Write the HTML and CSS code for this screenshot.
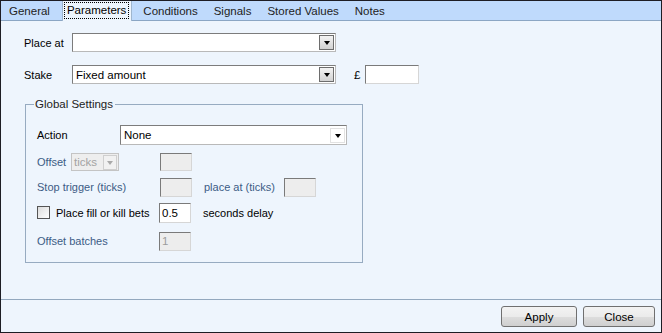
FILE: index.html
```html
<!DOCTYPE html>
<html>
<head>
	<title>Parameters</title>
	<link rel="stylesheet" href="styles.css">
</head>
<body>

	<div class="win">
		<div class="tabs">
			<span class="tab">General</span>
			<span class="tab sel"><span class="focus">Parameters</span></span>
			<span class="tab">Conditions</span>
			<span class="tab">Signals</span>
			<span class="tab">Stored Values</span>
			<span class="tab">Notes</span>
		</div>

		<div class="page">
			<div class="row r-place">
				<span class="lbl w48">Place at</span>
				<div class="combo wide"><span class="val"></span><span class="drop"><i></i></span></div>
			</div>

			<div class="row r-stake">
				<span class="lbl w48">Stake</span>
				<div class="combo wide"><span class="val">Fixed amount</span><span class="drop"><i></i></span></div>
				<span class="pound">&pound;</span>
				<span class="box money"></span>
			</div>

			<fieldset class="group">
				<legend>Global Settings</legend>

				<div class="row g-action">
					<span class="lbl w83">Action</span>
					<div class="combo action"><span class="val">None</span><span class="drop flat"><i></i></span></div>
				</div>

				<div class="row g-offset">
					<span class="lbl dis w34">Offset</span>
					<div class="combo small off"><span class="val">ticks</span><span class="drop"><i></i></span></div>
					<span class="box off tb"></span>
				</div>

				<div class="row g-stop">
					<span class="lbl dis w123">Stop trigger (ticks)</span>
					<span class="box off tb"></span>
					<span class="lbl dis after">place at (ticks)</span>
					<span class="box off tb"></span>
				</div>

				<div class="row g-fill">
					<span class="check"></span>
					<span class="lbl fill">Place fill or kill bets</span>
					<span class="box tb">0.5</span>
					<span class="lbl after">seconds delay</span>
				</div>

				<div class="row g-batch">
					<span class="lbl dis w122">Offset batches</span>
					<span class="box off tb">1</span>
				</div>
			</fieldset>
		</div>

		<div class="foot">
			<button type="button" class="btn">Apply</button>
			<button type="button" class="btn">Close</button>
		</div>
	</div>

</body>
</html>
```

FILE: styles.css
```css
body {
	margin: 0;
	font-family: "Liberation Sans", Arial, sans-serif;
	font-size: 11px;
	color: #000;
}

.win {
	width: 662px;
	height: 333px;
	box-sizing: border-box;
	border: 1px solid #1d1d24;
	background-color: #eef5fd;
	display: flex;
	flex-direction: column;
}

/* tab strip */
.tabs {
	height: 19px;
	background-color: #bfdafc;
	border-bottom: 1px solid #8ba6c4;
	display: flex;
	align-items: stretch;
}

.tab {
	display: flex;
	align-items: center;
	padding: 0 8px 0 8px;
	color: #222;
	font-size: 11.5px;
}

.tab.sel {
	background-color: #eef5fd;
	border-left: 1px solid #9fb6cf;
	border-right: 1px solid #9fb6cf;
	margin: 0 3px -1px 4px;
	padding: 0 2px 1px 1px;
	color: #000;
}

.focus {
	border: 1px dotted #000;
	padding: 1px 2px 1px 2px;
	line-height: 13px;
}

/* body of page */
.page {
	flex: 1;
	padding: 0 0 0 23px;
}

.row {
	display: flex;
	align-items: center;
}

.lbl { white-space: nowrap; }
.w48 { width: 48px; }
.w83 { width: 83px; }
.w34 { width: 34px; }
.w122 { width: 122px; }
.w123 { width: 123px; }
.dis { color: #3c5c85; }
.after { margin: 0 9px 0 12px; }
.fill { margin-left: 6px; width: 103px; }

.r-place { margin-top: 12px; height: 19px; }
.r-stake { margin-top: 13px; height: 19px; }

.combo {
	height: 19px;
	box-sizing: border-box;
	border: 1px solid #7c7c7c;
	border-bottom-color: #b9b9b9;
	border-right-color: #b9b9b9;
	background-color: #fff;
	display: flex;
	align-items: center;
}

.combo .val {
	flex: 1;
	padding-left: 3px;
	font-size: 11.5px;
}

.wide { width: 264px; }
.action { width: 227px; height: 20px; }

.drop {
	width: 15px;
	height: 15px;
	margin-right: 1px;
	box-sizing: border-box;
	border: 1px solid #6d6d6d;
	background: linear-gradient(#f3f3f3, #d2d2d2);
	display: flex;
	align-items: center;
	justify-content: center;
}

.drop i {
	width: 0;
	height: 0;
	border-top: 4px solid #000;
	border-left: 3px solid transparent;
	border-right: 3px solid transparent;
	margin-top: 1px;
}

.drop.flat {
	border-color: #e2e2e2;
	background: #fff;
}

.small {
	width: 48px;
	height: 18px;
}

.combo.off {
	background-color: #eeeeee;
	border-color: #c4c4c4;
	color: #a3a3a3;
}

.combo.off .val { padding-left: 2px; }

.combo.off .drop {
	border-color: #cfcfcf;
	background: #f1f1f1;
	width: 14px;
}

.combo.off .drop i { border-top-color: #a9a9a9; }

.pound {
	margin: 0 5px 0 18px;
	font-size: 11.5px;
}

.box {
	height: 19px;
	box-sizing: border-box;
	border: 1px solid #d6d6d6;
	border-top-color: #7a7a7a;
	border-left-color: #7a7a7a;
	background-color: #fff;
	padding-left: 2px;
	display: flex;
	align-items: center;
	font-size: 11.5px;
}

.money { width: 54px; }

.tb { width: 32px; }

.box.off {
	background-color: #ededed;
	color: #9c9c9c;
}

.check {
	width: 13px;
	height: 13px;
	box-sizing: border-box;
	border: 1px solid #555;
	background: linear-gradient(135deg, #dcdcdc, #fff);
}

/* group box */
.group {
	margin: 14px 0 0 1px;
	padding: 0 0 11px 11px;
	width: 338px;
	box-sizing: border-box;
	border: 1px solid #97abc1;
	min-width: 0;
}

.group legend {
	padding: 0 2px 0 1px;
	margin-left: -3px;
	color: #222;
	font-size: 11.5px;
}

.g-action { margin-top: 15px; height: 20px; }
.g-offset { margin-top: 8px; height: 18px; }
.g-offset .box { height: 18px; margin-left: 41px; }
.g-stop { margin-top: 6px; height: 20px; }
.g-stop .box { height: 19px; }
.g-fill { margin-top: 5px; height: 21px; }
.g-fill .box { height: 20px; }
.g-batch { margin-top: 8px; height: 20px; }

/* buttons */
.foot {
	height: 33px;
	box-sizing: border-box;
	border-top: 1px solid #93a8be;
	display: flex;
	justify-content: flex-end;
	align-items: flex-start;
	gap: 6px;
	padding: 6px 6px 0 0;
}

.btn {
	width: 76px;
	height: 21px;
	border: 1px solid #707070;
	border-radius: 3px;
	background: linear-gradient(#f3f3f3 0%, #ebebeb 50%, #dddddd 51%, #cfcfcf 100%);
	font-family: "Liberation Sans", Arial, sans-serif;
	font-size: 11.5px;
	color: #000;
	padding: 0;
}

.btn + .btn { width: 72px; }
```
